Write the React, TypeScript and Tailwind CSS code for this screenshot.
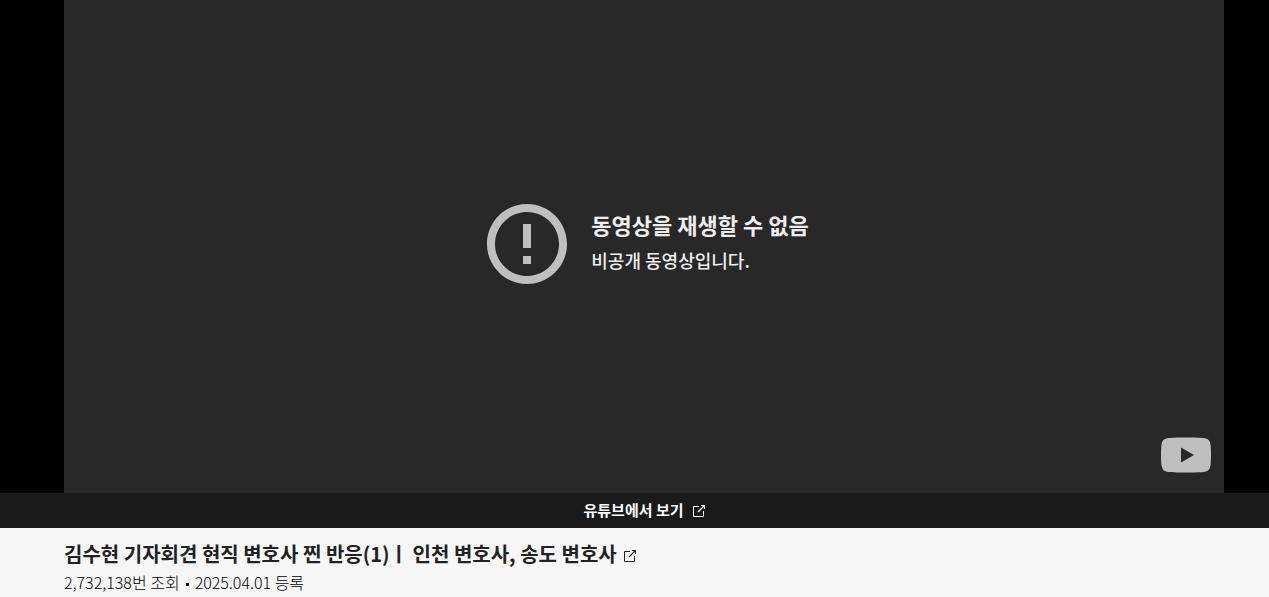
import {MdErrorOutline} from "react-icons/md";

const video = {
    title: "김수현 기자회견 현직 변호사 찐 반응(1)ㅣ 인천 변호사, 송도 변호사",
    views: "2,732,138번 조회",
    date: "2025.04.01 등록",
};

const OpenIcon = () => (
    <svg viewBox="0 0 14 14" fill="none" stroke="currentColor" className="w-3.5 h-3.5 shrink-0" aria-hidden="true">
        <path d="M7 2.5H1.5V12.5H11.5V7M9 1.5H12.5V5" />
        <path strokeWidth="1.3" d="M12.5 1.5L6 8" />
    </svg>
);

const YoutubeIcon = () => (
    <svg viewBox="0 0 50 36" className="w-[50px] h-9" aria-hidden="true">
        <path
            fill="#bfbfbf"
            fillRule="evenodd"
            d="M25 .5C34 .5 41 .8 44 1.3C47.500 2 49 4 49.500 7.500C50.200 13 50.200 23 49.500 28.500C49 32 47.500 34 44 34.700C41 35.300 34 35.500 25 35.500S9 35.300 6 34.700C2.500 34 1 32 .5 28.500C-.2 23-.2 13 .5 7.500C1 4 2.500 2 6 1.300C9 .8 16 .5 25 .5ZM20 10.500V25.500L33 18Z"
        />
    </svg>
);

const Player = () => {
    return (
        <div className="bg-black pl-16 pr-[45px]">
            <div className="relative flex items-center justify-center w-full aspect-[1160/493] pb-1.5 bg-[#282828]">
                <div className="flex items-center gap-4">
                    <MdErrorOutline className="w-24 h-24 shrink-0 text-[#bfbfbf]" />
                    <div className="flex flex-col gap-1 pb-1 text-[#eeeeee]">
                        <p className="text-[22px] leading-8 font-bold">동영상을 재생할 수 없음</p>
                        <p className="text-lg leading-8 font-medium">비공개 동영상입니다.</p>
                    </div>
                </div>
                <a href="#" aria-label="YouTube" className="absolute right-[13px] bottom-5">
                    <YoutubeIcon />
                </a>
            </div>
        </div>
    );
}

const App = () => {
    return (
        <main className="min-h-screen bg-[#f6f6f6] font-['Noto_Sans_CJK_KR',sans-serif]">
            <Player />
            <a href="#" className="flex items-center justify-center gap-2 h-[35px] pl-5 bg-[#1a1a1a] text-white text-[15px] font-bold">
                유튜브에서 보기
                <OpenIcon />
            </a>
            <section className="flex flex-col pl-16 pr-[45px] pt-3 text-[#222222]">
                <h1 className="text-xl leading-7 font-bold">
                    <a href="#" className="flex items-center gap-1.5">
                        {video.title}
                        <span className="pt-1"><OpenIcon /></span>
                    </a>
                </h1>
                <p className="flex items-center gap-1.5 text-base leading-7 font-light text-black">
                    <span>{video.views}</span>
                    <span className="w-[3px] h-[3px] mt-1 bg-black" />
                    <span>{video.date}</span>
                </p>
            </section>
        </main>
    );
}

export default App;
